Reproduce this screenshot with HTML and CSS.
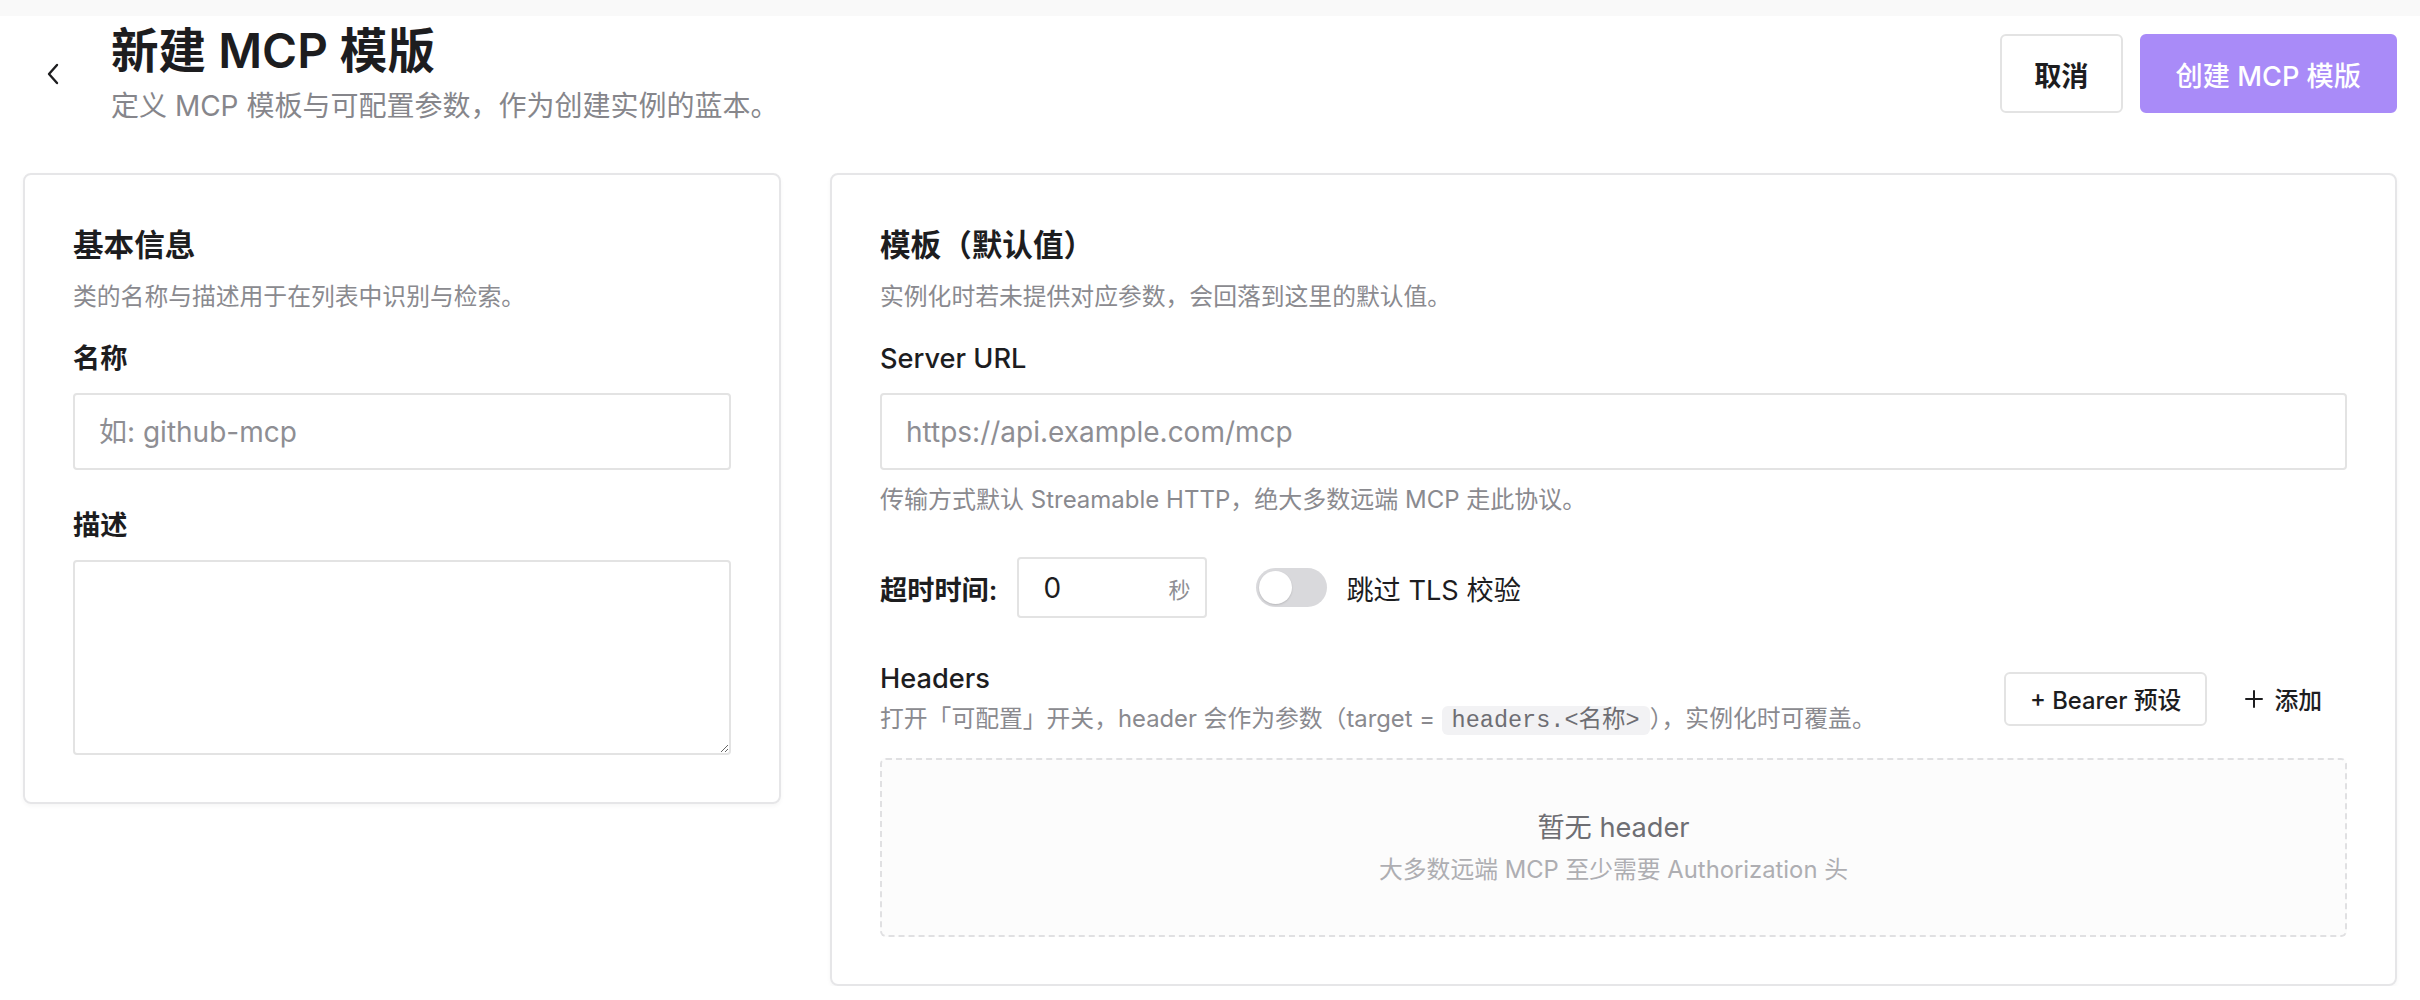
FILE: index.html
```html
<!DOCTYPE html>
<html lang="zh-CN">
<head>
    <meta charset="UTF-8">
    <meta name="viewport" content="width=device-width, initial-scale=1.0">
    <title>新建 MCP 模版</title>
    <link rel="stylesheet" href="styles.css">
</head>
<body>
    <div class="top-strip"></div>

    <header class="page-head">
        <button class="back-button" aria-label="返回">
            <svg width="16" height="22" viewBox="0 0 16 22" fill="none">
                <polyline points="12,2 4,11 12,20" stroke="#1d1d1f" stroke-width="2.4" stroke-linecap="round" stroke-linejoin="round"/>
            </svg>
        </button>
        <div class="head-text">
            <h1>新建 MCP 模版</h1>
            <p>定义 MCP 模板与可配置参数，作为创建实例的蓝本。</p>
        </div>
        <div class="head-actions">
            <button class="btn">取消</button>
            <button class="btn btn-primary">创建 MCP 模版</button>
        </div>
    </header>

    <main class="page-grid">
        <section class="card">
            <h2>基本信息</h2>
            <p class="card-desc">类的名称与描述用于在列表中识别与检索。</p>

            <div class="field">
                <label class="field-label" for="name">名称</label>
                <input class="text-input" id="name" type="text" placeholder="如: github-mcp">
            </div>
            <div class="field">
                <label class="field-label" for="desc">描述</label>
                <textarea class="text-area" id="desc"></textarea>
            </div>
        </section>

        <section class="card">
            <h2>模板（默认值）</h2>
            <p class="card-desc">实例化时若未提供对应参数，会回落到这里的默认值。</p>

            <div class="field">
                <label class="field-label latin" for="url">Server URL</label>
                <input class="text-input" id="url" type="text" placeholder="https://api.example.com/mcp">
                <p class="hint">传输方式默认 Streamable HTTP，绝大多数远端 MCP 走此协议。</p>
            </div>

            <div class="option-row">
                <span class="row-label">超时时间:</span>
                <div class="suffix-input">
                    <input type="text" value="0">
                    <span class="suffix">秒</span>
                </div>
                <label class="switch-wrap">
                    <span class="switch"><span class="knob"></span></span>
                    <span>跳过 TLS 校验</span>
                </label>
            </div>

            <div class="headers-row">
                <div class="headers-text">
                    <div class="headers-title">Headers</div>
                    <p class="headers-desc">打开「可配置」开关，header 会作为参数（target = <code class="chip">headers.&lt;名称&gt;</code>），实例化时可覆盖。</p>
                </div>
                <div class="headers-actions">
                    <button class="btn btn-small">+ Bearer 预设</button>
                    <button class="btn btn-ghost">
                        <svg width="20" height="20" viewBox="0 0 20 20">
                            <path d="M10 2v16M2 10h16" stroke="#1d1d1f" stroke-width="2" stroke-linecap="round"/>
                        </svg>
                        添加
                    </button>
                </div>
            </div>

            <div class="empty-box">
                <div class="empty-title">暂无 header</div>
                <div class="empty-sub">大多数远端 MCP 至少需要 Authorization 头</div>
            </div>
        </section>
    </main>
</body>
</html>
```

FILE: styles.css
```css
body {
    margin: 0;
    background: #fff;
    color: #1d1d1f;
    font-family: Inter, "Noto Sans CJK SC", sans-serif;
}

.top-strip {
    height: 16px;
    background: #f9f9f9;
}

/* page header */
.page-head {
    display: flex;
    align-items: center;
    padding: 4px 23px 0;
}

.back-button {
    width: 60px;
    height: 60px;
    margin-right: 28px;
    padding: 0;
    border: none;
    background: none;
    display: flex;
    align-items: center;
    justify-content: center;
    cursor: pointer;
}

.head-text h1 {
    margin: 0;
    font-size: 47.6px;
    line-height: 62px;
    font-weight: 600;
}

.head-text p {
    margin: 4px 0 0;
    font-size: 28px;
    line-height: 41px;
    color: #86868b;
}

.head-actions {
    margin-left: auto;
    display: flex;
    gap: 17px;
}

.btn {
    height: 79px;
    padding: 0 32px;
    border: 2px solid #e3e3e3;
    border-radius: 6px;
    background: #fff;
    color: #1d1d1f;
    font-family: inherit;
    font-size: 27.2px;
    font-weight: 600;
    cursor: pointer;
}

.btn-primary {
    padding: 0 34px;
    background: #a98bf8;
    border-color: #a98bf8;
    color: #fff;
    font-weight: 500;
}

/* cards */
.page-grid {
    display: grid;
    grid-template-columns: 758px 1fr;
    gap: 49px;
    align-items: start;
    padding: 0 23px;
    margin-top: 46px;
}

.card {
    border: 2px solid #e6e6e8;
    border-radius: 8px;
    padding: 48px 48px 47px;
    box-shadow: 0 2px 4px rgba(0, 0, 0, 0.04);
}

.card h2 {
    margin: 0;
    font-size: 30.6px;
    line-height: 43px;
    font-weight: 600;
}

.card-desc {
    margin: 13px 0 0;
    font-size: 23.8px;
    line-height: 36px;
    color: #8a8a8f;
}

.field-label {
    display: block;
    margin-top: 23px;
    font-size: 27.2px;
    line-height: 41px;
    font-weight: 600;
}

.field-label.latin {
    font-weight: 500;
}

.field + .field .field-label {
    margin-top: 35px;
}

.text-input,
.text-area {
    display: block;
    width: 100%;
    box-sizing: border-box;
    margin-top: 14px;
    border: 2px solid #e3e3e3;
    border-radius: 4px;
    padding: 0 24px;
    font-family: inherit;
    font-size: 28px;
    color: #1d1d1f;
    outline: none;
}

.text-input {
    height: 77px;
}

.text-area {
    height: 195px;
    padding: 16px 24px;
    resize: vertical;
}

.text-input::placeholder {
    color: #8e8e93;
}

.hint {
    margin: 12px 0 0;
    font-size: 24px;
    line-height: 36px;
    color: #8a8a8f;
}

/* timeout + tls */
.option-row {
    display: flex;
    align-items: center;
    gap: 20px;
    margin-top: 39px;
}

.row-label {
    font-size: 27.2px;
    font-weight: 600;
}

.suffix-input {
    width: 190px;
    height: 61px;
    box-sizing: border-box;
    border: 2px solid #e3e3e3;
    border-radius: 4px;
    display: flex;
    align-items: center;
    padding: 0 15px 0 24px;
}

.suffix-input input {
    flex: 1;
    min-width: 0;
    border: none;
    outline: none;
    padding: 0;
    font-family: inherit;
    font-size: 28px;
    color: #1d1d1f;
}

.suffix {
    font-size: 22px;
    color: #8e8e93;
}

.switch-wrap {
    display: flex;
    align-items: center;
    gap: 19px;
    margin-left: 29px;
    font-size: 27.2px;
}

.switch {
    position: relative;
    width: 71px;
    height: 39px;
    border-radius: 20px;
    background: #d9d9dc;
}

.knob {
    position: absolute;
    top: 3px;
    left: 3px;
    width: 33px;
    height: 33px;
    border-radius: 50%;
    background: #fff;
    box-shadow: 0 1px 2px rgba(0, 0, 0, 0.15);
}

/* headers */
.headers-row {
    display: flex;
    align-items: center;
    margin-top: 40px;
}

.headers-title {
    font-size: 27.2px;
    line-height: 41px;
    font-weight: 500;
}

.headers-desc {
    margin: 2px 0 0;
    font-size: 23.8px;
    line-height: 36px;
    color: #8a8a8f;
}

.chip {
    font-family: "Liberation Mono", "DejaVu Sans Mono", "Noto Sans CJK SC", monospace;
    font-size: 23.5px;
    background: #f2f2f4;
    color: #6e6e73;
    border-radius: 6px;
    padding: 1px 10px;
}

.headers-actions {
    margin-left: auto;
    display: flex;
    align-items: center;
    gap: 12px;
}

.btn-small {
    height: 54px;
    padding: 0 24px;
    font-size: 23.8px;
    font-weight: 500;
}

.btn-ghost {
    height: 54px;
    padding: 0 23px;
    border-color: transparent;
    display: flex;
    align-items: center;
    gap: 10px;
    font-size: 23.8px;
    font-weight: 500;
}

.empty-box {
    margin-top: 19px;
    height: 179px;
    box-sizing: border-box;
    border: 2px dashed #e0e0e2;
    border-radius: 6px;
    background: #fcfcfc;
    display: flex;
    flex-direction: column;
    align-items: center;
    justify-content: center;
    gap: 4px;
}

.empty-title {
    font-size: 27.2px;
    line-height: 41px;
    color: #6e6e73;
}

.empty-sub {
    font-size: 23.8px;
    line-height: 36px;
    color: #aeaeb2;
}
```
